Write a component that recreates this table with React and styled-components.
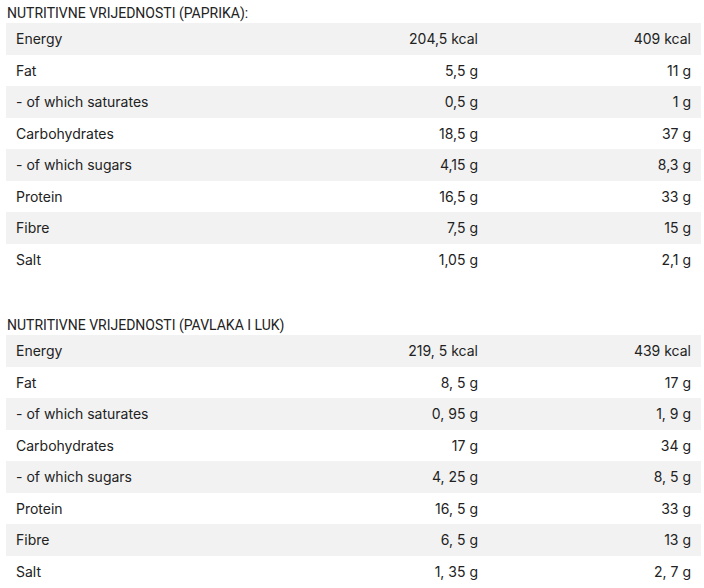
import React from "react";
import styled, { createGlobalStyle } from "styled-components";

const Global = createGlobalStyle`
  html, body { margin: 0; padding: 0; background: #fff; }
  body { font-family: Inter, "Noto Sans", sans-serif; color: #222; }
`;

const Page = styled.div`
  padding: 3px 3px 0 6px;
  display: flex;
  flex-direction: column;
  gap: 40px;
`;

const Section = styled.section`
  display: flex;
  flex-direction: column;
`;

const Title = styled.h3`
  margin: 0;
  font-family: Roboto, "Liberation Sans", sans-serif;
  font-weight: 400;
  font-size: 14px;
  line-height: 20px;
  padding-left: 1px;
  color: #222;
`;

const Table = styled.div`
  display: flex;
  flex-direction: column;
`;

const Row = styled.div`
  display: grid;
  grid-template-columns: 1fr 213px 213px;
  height: 31.5px;
  align-items: center;
  background: ${(p) => (p.$shade ? "#f2f2f2" : "#fff")};
  font-size: 14px;
`;

const Cell = styled.div`
  padding: 0 10px;
  text-align: ${(p) => (p.$right ? "right" : "left")};
  white-space: nowrap;
`;

const tables = [
  {
    title: "NUTRITIVNE VRIJEDNOSTI (PAPRIKA):",
    rows: [
      ["Energy", "204,5 kcal", "409 kcal"],
      ["Fat", "5,5 g", "11 g"],
      ["- of which saturates", "0,5 g", "1 g"],
      ["Carbohydrates", "18,5 g", "37 g"],
      ["- of which sugars", "4,15 g", "8,3 g"],
      ["Protein", "16,5 g", "33 g"],
      ["Fibre", "7,5 g", "15 g"],
      ["Salt", "1,05 g", "2,1 g"],
    ],
  },
  {
    title: "NUTRITIVNE VRIJEDNOSTI (PAVLAKA I LUK)",
    rows: [
      ["Energy", "219, 5 kcal", "439 kcal"],
      ["Fat", "8, 5 g", "17 g"],
      ["- of which saturates", "0, 95 g", "1, 9 g"],
      ["Carbohydrates", "17 g", "34 g"],
      ["- of which sugars", "4, 25 g", "8, 5 g"],
      ["Protein", "16, 5 g", "33 g"],
      ["Fibre", "6, 5 g", "13 g"],
      ["Salt", "1, 35 g", "2, 7 g"],
    ],
  },
];

export default function App() {
  return (
    <>
      <Global />
      <Page>
        {tables.map((t) => (
          <Section key={t.title}>
            <Title>{t.title}</Title>
            <Table>
              {t.rows.map((r, i) => (
                <Row key={r[0]} $shade={i % 2 === 0}>
                  <Cell>{r[0]}</Cell>
                  <Cell $right>{r[1]}</Cell>
                  <Cell $right>{r[2]}</Cell>
                </Row>
              ))}
            </Table>
          </Section>
        ))}
      </Page>
    </>
  );
}
